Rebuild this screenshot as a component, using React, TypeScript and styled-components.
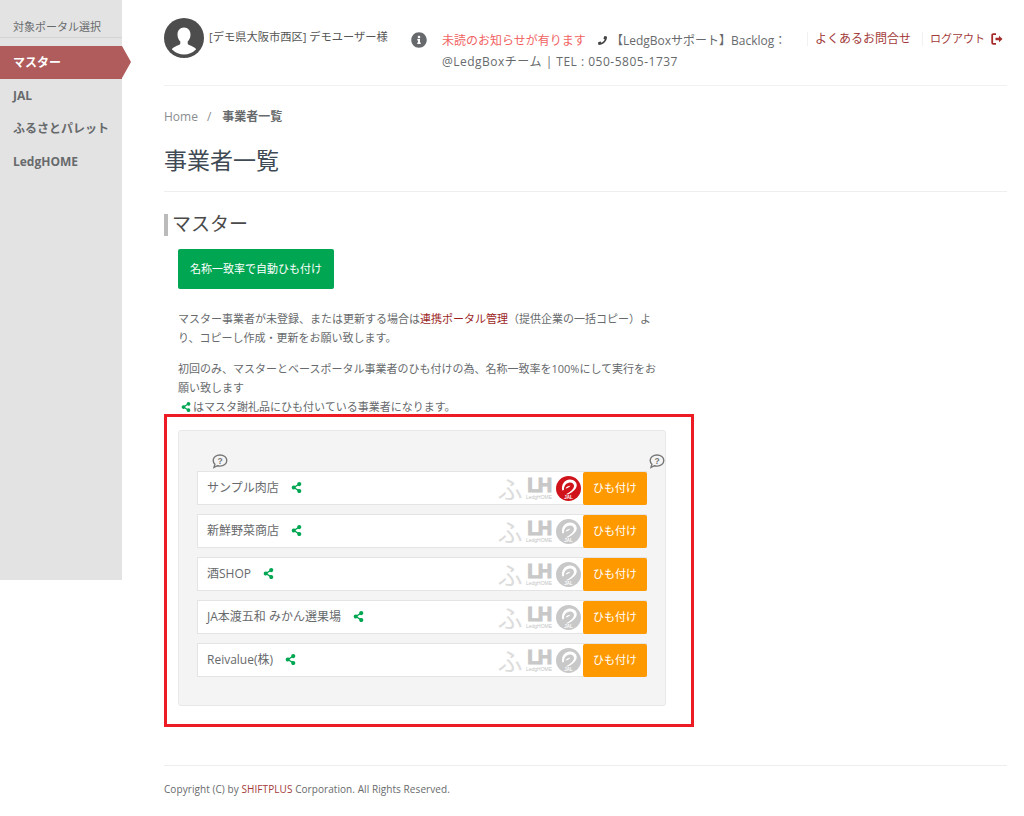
import React from "react";
import styled, { createGlobalStyle } from "styled-components";
import { FaInfoCircle, FaPhone, FaShareAlt } from "react-icons/fa";

const GlobalStyle = createGlobalStyle`
  html, body {
    margin: 0;
    padding: 0;
    background: #fff;
  }
  body {
    font-family: "Open Sans", "Noto Sans CJK JP", sans-serif;
    font-size: 11px;
    line-height: 19px;
    color: #676a6c;
  }
  * {
    box-sizing: border-box;
  }
`;

const Page = styled.div`
  display: flex;
  align-items: flex-start;
  width: 1024px;
  height: 816px;
  overflow: hidden;
`;

const Sidebar = styled.aside`
  flex: 0 0 122px;
  height: 580px;
  padding-top: 17px;
  background: #e3e3e3;
`;

const SideTitle = styled.div`
  height: 21px;
  padding-left: 13px;
  font-size: 11px;
  line-height: 19px;
  color: #676a6c;
  border-bottom: 1px solid #d4d4d4;
`;

const SideList = styled.nav`
  display: flex;
  flex-direction: column;
  margin-top: 8px;
`;

const SideItem = styled.a<{ $active?: boolean }>`
  position: relative;
  display: block;
  height: 33px;
  padding-left: 13px;
  font-size: 12px;
  font-weight: 700;
  line-height: 33px;
  color: ${(p) => (p.$active ? "#fff" : "#676a6c")};
  background: ${(p) => (p.$active ? "#b05c5c" : "transparent")};

  ${(p) =>
    p.$active &&
    `&::after {
      content: "";
      position: absolute;
      top: 0;
      left: 122px;
      border-style: solid;
      border-width: 16.5px 0 16.5px 9px;
      border-color: transparent transparent transparent #b05c5c;
    }`}
`;

const Main = styled.main`
  flex: 1;
  min-width: 0;
  padding: 0 17px 0 42px;
`;

const Header = styled.header`
  display: flex;
  align-items: flex-start;
  height: 86px;
  padding-top: 18px;
  border-bottom: 1px solid #f1f1f1;
`;

const UserBlock = styled.div`
  display: flex;
  flex: 0 0 247px;
  gap: 5px;
`;

const UserName = styled.span`
  font-size: 11.25px;
  line-height: 38px;
  white-space: nowrap;
  color: #555;
`;

const InfoSlot = styled.div`
  flex: 0 0 31px;
  padding-top: 14px;
  font-size: 16px;
  line-height: 16px;
  color: #676a6c;
`;

const Notice = styled.div`
  flex: 0 0 365px;
  padding-top: 12px;
  font-size: 12px;
  line-height: 21px;
  color: #676a6c;
`;

const Unread = styled.span`
  margin-right: 12px;
  color: #f0625f;
`;

const PhoneIcon = styled(FaPhone)`
  margin-right: 1px;
  font-size: 9px;
  color: #444;
`;

const TelLine = styled.span`
  letter-spacing: 0.5px;
`;

const TopLink = styled.a`
  display: flex;
  align-items: center;
  flex: 0 0 auto;
  height: 14px;
  margin-top: 14px;
  padding: 0 11px 0 7px;
  font-size: 12px;
  line-height: 14px;
  white-space: nowrap;
  color: #a33b3b;
  border-left: 1px solid #f1f1f1;
`;

const LogoutLink = styled(TopLink)`
  gap: 6px;
  padding-right: 0;
  font-size: 11px;
`;

const Crumbs = styled.div`
  display: flex;
  gap: 9px;
  margin-top: 21px;
  font-size: 12px;
  line-height: 20px;
  color: #8a8d8f;
`;

const CrumbCurrent = styled.strong`
  margin-left: 2px;
  font-weight: 700;
  color: #676a6c;
`;

const PageTitle = styled.h1`
  height: 52px;
  margin: 13px 0 0;
  padding-top: 2px;
  font-size: 23px;
  font-weight: 400;
  line-height: 36px;
  color: #3f4a54;
  border-bottom: 1px solid #eee;
`;

const SectionTitle = styled.h2`
  height: 22px;
  margin: 22px 0 0;
  padding-left: 4px;
  font-size: 19px;
  font-weight: 400;
  line-height: 20px;
  color: #4a4a4a;
  border-left: 4px solid #bbb;
`;

const Body = styled.div`
  padding-left: 14px;
`;

const AutoButton = styled.button`
  display: block;
  width: 156px;
  height: 40px;
  margin-top: 13px;
  padding: 0 0 1px;
  font: inherit;
  font-size: 11px;
  color: #fff;
  background: #00a651;
  border: 0;
  border-radius: 2px;
`;

const Paragraph = styled.p`
  width: 487px;
  margin: 0;
  font-size: 11px;
  line-height: 19px;
  color: #676a6c;

  & + & {
    margin-top: 12px;
  }
`;

const Intro = styled.div`
  margin-top: 20px;
`;

const PortalLink = styled.a`
  color: #9c1f1f;
`;

const ShareGlyph = styled(FaShareAlt)`
  flex: 0 0 auto;
  font-size: 11px;
  color: #00a651;
`;

const InlineShare = styled(ShareGlyph)`
  margin: 0 2px 0 3px;
  font-size: 10px;
  transform: translateY(1px);
`;

const Highlight = styled.section`
  width: 530px;
  height: 313px;
  margin: -2px 0 0 -14px;
  padding: 13px 25px 0 11px;
  border: 3px solid #ed1c24;
`;

const Well = styled.div`
  height: 276px;
  padding: 23px 18px 0 18px;
  background: #f4f4f4;
  border: 1px solid #e8e8e8;
  border-radius: 3px;
`;

const HintRow = styled.div`
  display: flex;
  justify-content: space-between;
  height: 17px;
  padding: 0 0 0 15px;
  margin-right: -18px;
`;

const RowList = styled.div`
  display: flex;
  flex-direction: column;
  gap: 9px;
`;

const Row = styled.div`
  display: flex;
  align-items: center;
  height: 34px;
  padding-left: 9px;
  background: #fff;
  border: 1px solid #e4e4e4;
`;

const RowName = styled.span`
  padding-bottom: 2px;
  font-size: 12px;
  color: #676a6c;
  white-space: nowrap;
`;

const RowShare = styled(ShareGlyph)`
  margin: 0 0 2px 12px;
`;

const Logos = styled.div`
  display: flex;
  align-items: center;
  margin-left: auto;
`;

const FuroLogo = styled.span`
  width: 26px;
  margin-right: 3px;
  font-family: "Noto Sans CJK JP", sans-serif;
  font-size: 25px;
  line-height: 26px;
  text-align: center;
  color: #dcdcdc;
`;

const LhLogo = styled.span`
  display: flex;
  flex-direction: column;
  align-items: center;
  width: 26px;
  margin-right: 4px;
`;

const LhMark = styled.span`
  font-family: "Liberation Sans", sans-serif;
  font-size: 20px;
  font-weight: 700;
  line-height: 17px;
  letter-spacing: -1.5px;
  color: #c8c8c8;
  -webkit-text-stroke: 1px #c8c8c8;
`;

const LhCaption = styled.span`
  font-family: "Liberation Sans", sans-serif;
  font-size: 5px;
  line-height: 6px;
  color: #c4c4c4;
`;

const TieButton = styled.button`
  width: 64px;
  height: 33px;
  margin: -1px -1px -1px 2px;
  padding: 0 0 2px;
  font: inherit;
  font-size: 11px;
  color: #fff;
  background: #ff9900;
  border: 0;
  border-radius: 2px;
`;

const Footer = styled.footer`
  height: 40px;
  margin-top: 38px;
  padding-top: 13px;
  font-size: 10px;
  line-height: 20px;
  letter-spacing: 0.07px;
  color: #676a6c;
  border-top: 1px solid #eee;
`;

const Company = styled.span`
  color: #a33b3b;
`;

const Avatar = () => (
  <svg width="40" height="40" viewBox="0 0 40 40" aria-hidden>
    <defs>
      <clipPath id="avatar-clip">
        <circle cx="20" cy="20" r="16.500" />
      </clipPath>
    </defs>
    <circle cx="20" cy="20" r="20" fill="#4d4d4d" />
    <g clipPath="url(#avatar-clip)" fill="#fff">
      <path d="M20 9.500c-4 0-6.500 3-6.500 7 0 3 1.200 5.500 2.800 7v2c0 1.800-6.300 2.500-8.300 5.500v9h24v-9c-2-3-8.300-3.700-8.300-5.500v-2c1.600-1.500 2.800-4 2.800-7 0-4-2.500-7-6.500-7z" />
    </g>
  </svg>
);

const LogoutIcon = () => (
  <svg width="12" height="12" viewBox="0 0 12 12" aria-hidden>
    <path d="M5 1.200H2.200a1 1 0 0 0-1 1v7.600a1 1 0 0 0 1 1H5" fill="none" stroke="#a52a2a" strokeWidth="1.800" />
    <path d="M4.500 4.800h3.500V2.800L11.500 6 8 9.200V7.200H4.500z" fill="#a52a2a" />
  </svg>
);

const HintIcon = () => (
  <svg width="16" height="15" viewBox="0 0 16 15" aria-hidden>
    <path
      d="M8 1C4.200 1 1.200 3.300 1.200 6.500c0 1.500.6 2.700 1.700 3.700l-.9 3.300 3.400-1.800c.8.200 1.700.4 2.600.4 3.800 0 6.800-2.400 6.800-5.600S11.800 1 8 1z"
      fill="none"
      stroke="#777"
      strokeWidth="1.400"
    />
    <text x="8" y="9.800" textAnchor="middle" fontSize="8.500" fontWeight="700" fontFamily="Liberation Sans" fill="#777">
      ?
    </text>
  </svg>
);

const JalLogo = ({ on }: { on?: boolean }) => (
  <svg width="25" height="25" viewBox="0 0 25 25" aria-hidden>
    <circle cx="12.500" cy="12.500" r="12.500" fill={on ? "#d0121b" : "#c8c8c8"} />
    <path
      d="M6.300 14.500C4.800 9 8.500 3.500 14 3.500c4.300 0 7.200 3 6.700 6.600-.4 3-3.300 5.800-8.700 8.400l-2-.2c4.500-2.500 7.600-5 8-7.900.3-2-1.300-3.900-4-3.900-3.800 0-6.400 3.700-6 7.500l-1.700.5z"
      fill="#fff"
    />
    <path d="M9.500 12.500c1-1.800 2.700-2.800 5-2.800-1.200 1.500-2.800 2.500-5 2.800z" fill="#fff" />
    <text x="12.500" y="22.800" textAnchor="middle" fontSize="4.500" fontWeight="700" fontFamily="Liberation Sans" fill="#fff">
      JAL
    </text>
  </svg>
);

const vendors = [
  { name: "サンプル肉店", jal: true },
  { name: "新鮮野菜商店" },
  { name: "酒SHOP" },
  { name: "JA本渡五和 みかん選果場" },
  { name: "Reivalue(株)" },
];

export default function App() {
  return (
    <Page>
      <GlobalStyle />
      <Sidebar>
        <SideTitle>対象ポータル選択</SideTitle>
        <SideList>
          <SideItem $active>マスター</SideItem>
          <SideItem>JAL</SideItem>
          <SideItem>ふるさとパレット</SideItem>
          <SideItem>LedgHOME</SideItem>
        </SideList>
      </Sidebar>
      <Main>
        <Header>
          <UserBlock>
            <Avatar />
            <UserName>[デモ県大阪市西区] デモユーザー様</UserName>
          </UserBlock>
          <InfoSlot>
            <FaInfoCircle />
          </InfoSlot>
          <Notice>
            <Unread>未読のお知らせが有ります</Unread>
            <PhoneIcon /> 【LedgBoxサポート】Backlog：
            <br />
            <TelLine>@LedgBoxチーム | TEL : 050-5805-1737</TelLine>
          </Notice>
          <TopLink>よくあるお問合せ</TopLink>
          <LogoutLink>
            ログアウト
            <LogoutIcon />
          </LogoutLink>
        </Header>
        <Crumbs>
          <span>Home</span>
          <span>/</span>
          <CrumbCurrent>事業者一覧</CrumbCurrent>
        </Crumbs>
        <PageTitle>事業者一覧</PageTitle>
        <SectionTitle>マスター</SectionTitle>
        <Body>
          <AutoButton>名称一致率で自動ひも付け</AutoButton>
          <Intro>
            <Paragraph>
              マスター事業者が未登録、または更新する場合は<PortalLink>連携ポータル管理</PortalLink>（提供企業の一括コピー）より、コピーし作成・更新をお願い致します。
            </Paragraph>
            <Paragraph>
              初回のみ、マスターとベースポータル事業者のひも付けの為、名称一致率を100%にして実行をお願い致します
              <br />
              <InlineShare />
              はマスタ謝礼品にひも付いている事業者になります。
            </Paragraph>
          </Intro>
          <Highlight>
            <Well>
              <HintRow>
                <HintIcon />
                <HintIcon />
              </HintRow>
              <RowList>
                {vendors.map((v) => (
                  <Row key={v.name}>
                    <RowName>{v.name}</RowName>
                    <RowShare />
                    <Logos>
                      <FuroLogo>ふ</FuroLogo>
                      <LhLogo>
                        <LhMark>LH</LhMark>
                        <LhCaption>LedgHOME</LhCaption>
                      </LhLogo>
                      <JalLogo on={v.jal} />
                    </Logos>
                    <TieButton>ひも付け</TieButton>
                  </Row>
                ))}
              </RowList>
            </Well>
          </Highlight>
        </Body>
        <Footer>
          Copyright (C) by <Company>SHIFTPLUS</Company> Corporation. All Rights Reserved.
        </Footer>
      </Main>
    </Page>
  );
}
